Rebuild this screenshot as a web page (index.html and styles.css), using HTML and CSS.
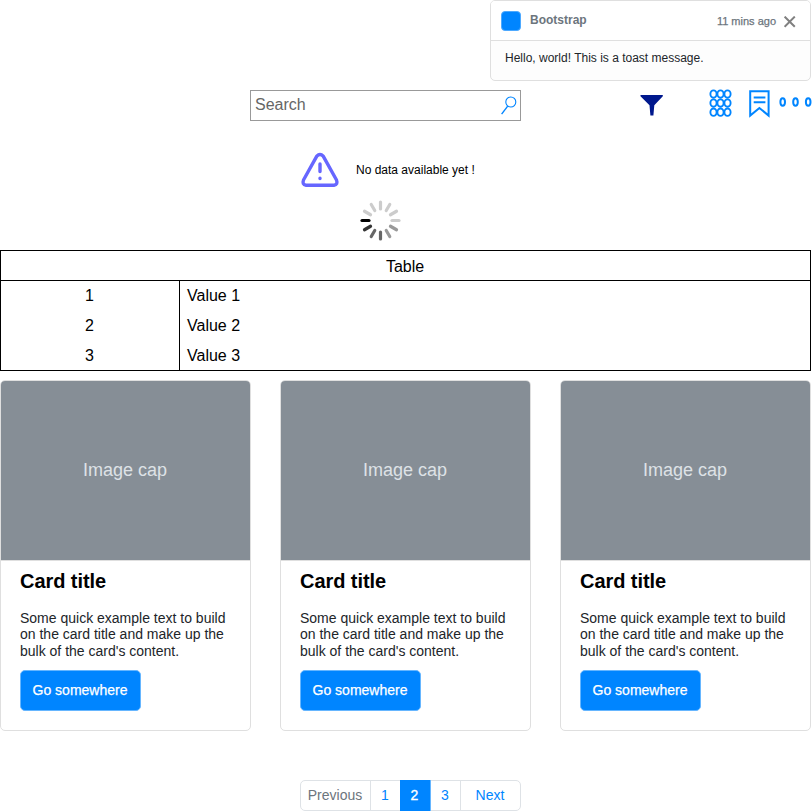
FILE: index.html
```html
<!DOCTYPE html>
<html lang="en">
<head>
<meta charset="utf-8">
<title>Components</title>
<link rel="stylesheet" href="styles.css">
</head>
<body>
<main class="page">
  <section class="toast">
    <header class="toast-header">
      <span class="toast-mark"></span>
      <strong class="toast-title">Bootstrap</strong>
      <span class="toast-time">11 mins ago</span>
      <svg class="toast-close" width="12" height="12" viewBox="0 0 12 12"><path d="M.6 .6L10.8 10.8M10.8 .6L.6 10.8"/></svg>
    </header>
    <p class="toast-body">Hello, world! This is a toast message.</p>
  </section>

  <div class="toolbar">
    <div class="search">
      <span>Search</span>
      <svg class="line-icon" width="18" height="20" viewBox="0 0 18 20"><circle cx="10.8" cy="7" r="5" stroke-width="1.1"/><path d="M7.7 11.1L1.6 19.2" stroke-width="1.4"/></svg>
    </div>
    <svg class="filter" width="24" height="22" viewBox="0 0 24 22"><path d="M.5 0H22.8V1.2L14.3 10.2L13.4 20.5H10.4L9.5 10.2L.5 1.2Z"/></svg>
    <svg class="line-icon grid-icon" width="24" height="28" viewBox="0 0 24 28" stroke-width="1.9">
      <ellipse cx="4.5" cy="4.1" rx="3.1" ry="3.7"/><ellipse cx="11.5" cy="4.1" rx="3.1" ry="3.7"/><ellipse cx="18.5" cy="4.1" rx="3.1" ry="3.7"/>
      <ellipse cx="4.5" cy="13.1" rx="3.1" ry="3.7"/><ellipse cx="11.5" cy="13.1" rx="3.1" ry="3.7"/><ellipse cx="18.5" cy="13.1" rx="3.1" ry="3.7"/>
      <ellipse cx="4.5" cy="22.2" rx="3.1" ry="3.7"/><ellipse cx="11.5" cy="22.2" rx="3.1" ry="3.7"/><ellipse cx="18.5" cy="22.2" rx="3.1" ry="3.7"/>
    </svg>
    <svg class="line-icon bookmark" width="22" height="28" viewBox="0 0 22 28" stroke-width="2"><path d="M2.2 1.3H20.6V25.6L11.4 18L2.2 25.6ZM5.7 7.5H17.4M5.7 12.2H17.4"/></svg>
    <svg class="line-icon more" width="34" height="10" viewBox="0 0 34 10" stroke-width="2"><ellipse cx="4.7" cy="5" rx="2.3" ry="3.7"/><ellipse cx="17.5" cy="5" rx="2.3" ry="3.7"/><ellipse cx="30.2" cy="5" rx="2.3" ry="3.7"/></svg>
  </div>

  <div class="empty">
    <svg width="40" height="36" viewBox="0 0 40 36" fill="none" stroke="#6666ff" stroke-width="3.4" stroke-linecap="round" stroke-linejoin="round"><path d="M16.8 4.2Q20 .7 23.2 4.2L36.5 28Q38.2 32.6 34 33.2H6Q1.8 32.6 3.5 28Z"/><path d="M20 12V19.5M20 26.3V26.5"/></svg>
    <span>No data available yet !</span>
  </div>

  <svg class="spinner" width="42" height="42" viewBox="-21.5 -21.5 42 42">
    <g stroke-width="3.2" stroke-linecap="round">
      <path d="M-18.5 0H-11.5" stroke="#000"/>
      <path d="M-18.5 0H-11.5" stroke="#ccc" transform="rotate(30)"/>
      <path d="M-18.5 0H-11.5" stroke="#ccc" transform="rotate(60)"/>
      <path d="M-18.5 0H-11.5" stroke="#ccc" transform="rotate(90)"/>
      <path d="M-18.5 0H-11.5" stroke="#ccc" transform="rotate(120)"/>
      <path d="M-18.5 0H-11.5" stroke="#ccc" transform="rotate(150)"/>
      <path d="M-18.5 0H-11.5" stroke="#ccc" transform="rotate(180)"/>
      <path d="M-18.5 0H-11.5" stroke="#999" transform="rotate(210)"/>
      <path d="M-18.5 0H-11.5" stroke="#999" transform="rotate(240)"/>
      <path d="M-18.5 0H-11.5" stroke="#666" transform="rotate(270)"/>
      <path d="M-18.5 0H-11.5" stroke="#666" transform="rotate(300)"/>
      <path d="M-18.5 0H-11.5" stroke="#333" transform="rotate(330)"/>
    </g>
  </svg>

  <div class="table">
    <div class="table-title">Table</div>
    <div class="row"><span class="key">1</span><span class="value">Value 1</span></div>
    <div class="row"><span class="key">2</span><span class="value">Value 2</span></div>
    <div class="row"><span class="key">3</span><span class="value">Value 3</span></div>
  </div>

  <div class="cards">
    <article class="card">
      <div class="card-image">Image cap</div>
      <div class="card-body">
        <h2>Card title</h2>
        <p>Some quick example text to build on the card title and make up the bulk of the card's content.</p>
        <a class="button">Go somewhere</a>
      </div>
    </article>
    <article class="card">
      <div class="card-image">Image cap</div>
      <div class="card-body">
        <h2>Card title</h2>
        <p>Some quick example text to build on the card title and make up the bulk of the card's content.</p>
        <a class="button">Go somewhere</a>
      </div>
    </article>
    <article class="card">
      <div class="card-image">Image cap</div>
      <div class="card-body">
        <h2>Card title</h2>
        <p>Some quick example text to build on the card title and make up the bulk of the card's content.</p>
        <a class="button">Go somewhere</a>
      </div>
    </article>
  </div>

  <nav class="pagination">
    <a class="previous">Previous</a>
    <a>1</a>
    <a class="active">2</a>
    <a>3</a>
    <a class="next">Next</a>
  </nav>
</main>
</body>
</html>
```
FILE: styles.css
```css
* { box-sizing: border-box; }
body { margin: 0; background: #fff; color: #000; font-family: "Liberation Sans", Arial, sans-serif; overflow: hidden; }
svg { display: block; flex: none; }
.page { width: 811px; display: flex; flex-direction: column; }

.toast { width: 321px; height: 81px; margin-left: auto; border: 1px solid #dfdfdf; border-radius: 5px; background: #fdfdfd; }
.toast-header { display: flex; align-items: center; height: 40px; padding: 0 14px 0 10px; border-bottom: 1px solid #dfdfdf; border-radius: 4px 4px 0 0; background: #fff; color: #6c757d; }
.toast-mark { width: 20px; height: 20px; margin-right: 9px; border-radius: 4px; border: 1px solid #4da9ff; background: #0085ff; }
.toast-title { flex: 1; margin-bottom: 2px; font-size: 12px; line-height: 14px; }
.toast-time { font-size: 11px; line-height: 14px; margin: 0 8px 0 0; -webkit-text-stroke: .25px #6c757d; }
.toast-close { margin-top: 2px; fill: none; stroke: #808080; stroke-width: 2; }
.toast-body { margin: 0; padding: 10px 14px; color: #212529; font-size: 12px; line-height: 14px; }

.toolbar { display: flex; align-items: flex-start; height: 31px; margin: 9px 0 0 250px; width: 562px; }
.search { display: flex; align-items: flex-start; justify-content: space-between; width: 271px; height: 31px; padding: 4px 2px 0 4px; border: 1px solid #999; color: #666; font-size: 16px; line-height: 19px; }
.line-icon { fill: none; stroke: #0085ff; }
.filter { margin: 5px 0 0 119px; fill: #00188d; }
.grid-icon { margin-left: 45px; overflow: visible; }
.bookmark { margin-left: 15px; }
.more { margin: 7px 0 0 8px; }

.empty { display: flex; align-items: center; gap: 16px; height: 36px; margin: 31px 0 0 300px; font-size: 12px; line-height: 14px; }
.spinner { margin: 11px 0 0 359px; height: 42px; }

.table { height: 121px; margin-top: 9px; border: 1px solid #000; font-size: 16px; line-height: 29px; }
.table-title { height: 30px; padding-right: 1px; border-bottom: 1px solid #000; text-align: center; line-height: 31px; }
.row { display: flex; height: 30px; }
.row:last-child { height: 29px; }
.key { width: 179px; padding-right: 1px; border-right: 1px solid #000; text-align: center; }
.value { padding-left: 7px; }

.cards { display: grid; grid-template-columns: repeat(3, 251px); gap: 29px; margin-top: 9px; }
.card { height: 351px; border: 1px solid #dfdfdf; border-radius: 5px; overflow: hidden; }
.card-image { height: 180px; padding-right: 1px; border-bottom: 1px solid #dfdfdf; background: #868e96; color: #dee2e6; font-size: 18px; line-height: 178px; text-align: center; }
.card-body { padding: 8px 19px; }
.card h2 { margin: 0; font-size: 20px; line-height: 24px; letter-spacing: -.05px; }
.card p { width: 215px; height: 50px; margin: 17px 0 10px; color: #212529; font-size: 14px; line-height: 16.4px; }
.button { display: block; width: 121px; height: 41px; padding-right: 1px; border: 1px solid #66b6ff; border-radius: 5px; background: #0085ff; color: #fff; font-size: 14px; line-height: 39px; text-align: center; -webkit-text-stroke: .25px #fff; }

.pagination { display: flex; width: 221px; height: 31px; margin: 49px 0 0 300px; border: 1px solid #dee2e6; border-radius: 5px; font-size: 14px; line-height: 29px; text-align: center; color: #0085ff; }
.pagination a { width: 30px; padding-right: 1px; border-right: 1px solid #dee2e6; }
.pagination .previous { width: 70px; color: #6c757d; }
.pagination .active { height: 31px; margin: -1px 0 0 -1px; width: 31px; line-height: 31px; background: #0085ff; color: #fff; -webkit-text-stroke: .35px #fff; border-color: #66b6ff; }
.pagination .next { flex: 1; border: 0; }
```
